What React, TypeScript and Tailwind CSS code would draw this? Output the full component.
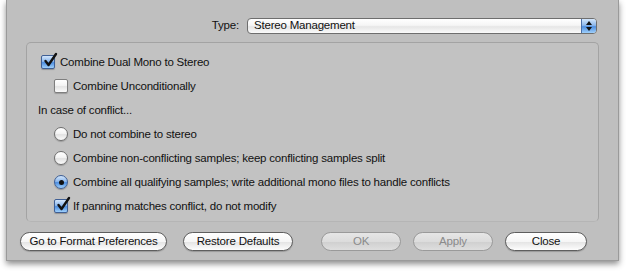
import React from "react";

const font = { fontFamily: '"Liberation Sans", Arial, sans-serif' };

const Check = ({ checked }: { checked: boolean }) =>
  checked ? (
    <span className="relative flex h-[14px] w-[14px] shrink-0 items-center justify-center rounded-[2px] border border-[#3f5f95] bg-[linear-gradient(to_bottom,#d3e6fb_0%,#8db8ec_45%,#4d8ee0_55%,#9fd0fb_100%)] shadow-[0_1px_1px_rgba(0,0,0,0.25)]">
      <svg width="16" height="16" viewBox="0 0 16 16" className="absolute -top-[4px] left-[0px]">
        <path d="M3.5 9 L6.5 13 L14 2" fill="none" stroke="#111" strokeWidth="2.4" strokeLinecap="round" strokeLinejoin="round" />
      </svg>
    </span>
  ) : (
    <span className="h-[14px] w-[14px] shrink-0 rounded-[2px] border border-[#7e7e7e] bg-[linear-gradient(to_bottom,#ffffff_0%,#f4f4f4_45%,#e4e4e4_55%,#fbfbfb_100%)] shadow-[0_1px_1px_rgba(0,0,0,0.2)]" />
  );

const Radio = ({ on }: { on: boolean }) =>
  on ? (
    <span className="flex h-[14px] w-[14px] shrink-0 items-center justify-center rounded-full border border-[#3f5f95] bg-[linear-gradient(to_bottom,#d3e6fb_0%,#8db8ec_45%,#4d8ee0_55%,#9fd0fb_100%)] shadow-[0_1px_1px_rgba(0,0,0,0.25)]">
      <span className="h-[5px] w-[5px] rounded-full bg-[#111]" />
    </span>
  ) : (
    <span className="h-[14px] w-[14px] shrink-0 rounded-full border border-[#6f6f6f] bg-[linear-gradient(to_bottom,#ffffff_0%,#f4f4f4_45%,#e2e2e2_55%,#fbfbfb_100%)] shadow-[0_1px_1px_rgba(0,0,0,0.2)]" />
  );

const Button = ({
  label,
  w,
  disabled,
}: {
  label: string;
  w: string;
  disabled?: boolean;
}) => (
  <div
    className={
      disabled
        ? `${w} flex h-[19px] items-center justify-center rounded-full border border-[#9a9a9a] bg-[linear-gradient(to_bottom,#e6e6e6_0%,#dcdcdc_50%,#cfcfcf_51%,#dedede_100%)] text-[11.5px] tracking-[-0.2px] text-[#8a8a8a]`
        : `${w} flex h-[19px] items-center justify-center rounded-full border border-[#5e5e5e] bg-[linear-gradient(to_bottom,#ffffff_0%,#f6f6f6_50%,#e3e3e3_51%,#fdfdfd_100%)] text-[11.5px] tracking-[-0.2px] text-[#111] shadow-[0_1px_1px_rgba(0,0,0,0.2)]`
    }
  >
    {label}
  </div>
);

const Row = ({ children, pl }: { children: React.ReactNode; pl: string }) => (
  <div className={`flex h-[24px] items-center gap-[5px] ${pl}`}>{children}</div>
);

export default function App() {
  return (
    <div className="h-[272px] w-[626px] bg-white" style={font}>
      <div className="ml-[6px] flex h-[261px] w-[613px] flex-col border-x border-b border-[#9a9a9a] bg-[#bfbfbf] shadow-[0_3px_6px_rgba(0,0,0,0.45)]">
        <div className="mt-[17px] flex items-center justify-end gap-[8px] pr-[21px]">
          <span className="text-[11.5px] tracking-[-0.2px] text-[#111]">Type:</span>
          <div className="flex h-[16px] w-[350px] items-stretch overflow-hidden rounded-[4px] border border-[#6e6e6e] bg-[linear-gradient(to_bottom,#ffffff_0%,#f5f5f5_45%,#e6e6e6_55%,#fafafa_100%)]">
            <span className="flex flex-1 items-center pl-[6px] text-[11.5px] tracking-[-0.2px] text-[#111]">Stereo Management</span>
            <span className="flex w-[15px] flex-col items-center justify-center gap-[2px] border-l border-[#4b6fa8] bg-[linear-gradient(to_bottom,#d3e6fb_0%,#8db8ec_45%,#4d8ee0_55%,#9fd0fb_100%)]">
              <svg width="6" height="4" viewBox="0 0 6 4"><path d="M0 4 L3 0 L6 4 Z" fill="#111" /></svg>
              <svg width="6" height="4" viewBox="0 0 6 4"><path d="M0 0 L3 4 L6 0 Z" fill="#111" /></svg>
            </span>
          </div>
        </div>

        <div className="ml-[19px] mt-[8px] flex h-[180px] w-[573px] flex-col rounded-[5px] border border-[#a3a3a3] border-b-[#b5b5b5] bg-[#c2c2c2] pt-[7px] text-[11.5px] tracking-[-0.2px] text-[#111]">
          <Row pl="pl-[14px]">
            <Check checked />
            <span>Combine Dual Mono to Stereo</span>
          </Row>
          <Row pl="pl-[27px]">
            <Check checked={false} />
            <span>Combine Unconditionally</span>
          </Row>
          <Row pl="pl-[11px]">
            <span>In case of conflict...</span>
          </Row>
          <Row pl="pl-[27px]">
            <Radio on={false} />
            <span>Do not combine to stereo</span>
          </Row>
          <Row pl="pl-[27px]">
            <Radio on={false} />
            <span>Combine non-conflicting samples; keep conflicting samples split</span>
          </Row>
          <Row pl="pl-[27px]">
            <Radio on />
            <span>Combine all qualifying samples; write additional mono files to handle conflicts</span>
          </Row>
          <Row pl="pl-[27px]">
            <Check checked />
            <span>If panning matches conflict, do not modify</span>
          </Row>
        </div>

        <div className="ml-[13px] mt-[10px] flex items-center">
          <Button label="Go to Format Preferences" w="w-[147px]" />
          <div className="ml-[16px]">
            <Button label="Restore Defaults" w="w-[110px]" />
          </div>
          <div className="ml-[28px] flex gap-[12px]">
            <Button label="OK" w="w-[80px]" disabled />
            <Button label="Apply" w="w-[80px]" disabled />
            <Button label="Close" w="w-[82px]" />
          </div>
        </div>
      </div>
    </div>
  );
}
